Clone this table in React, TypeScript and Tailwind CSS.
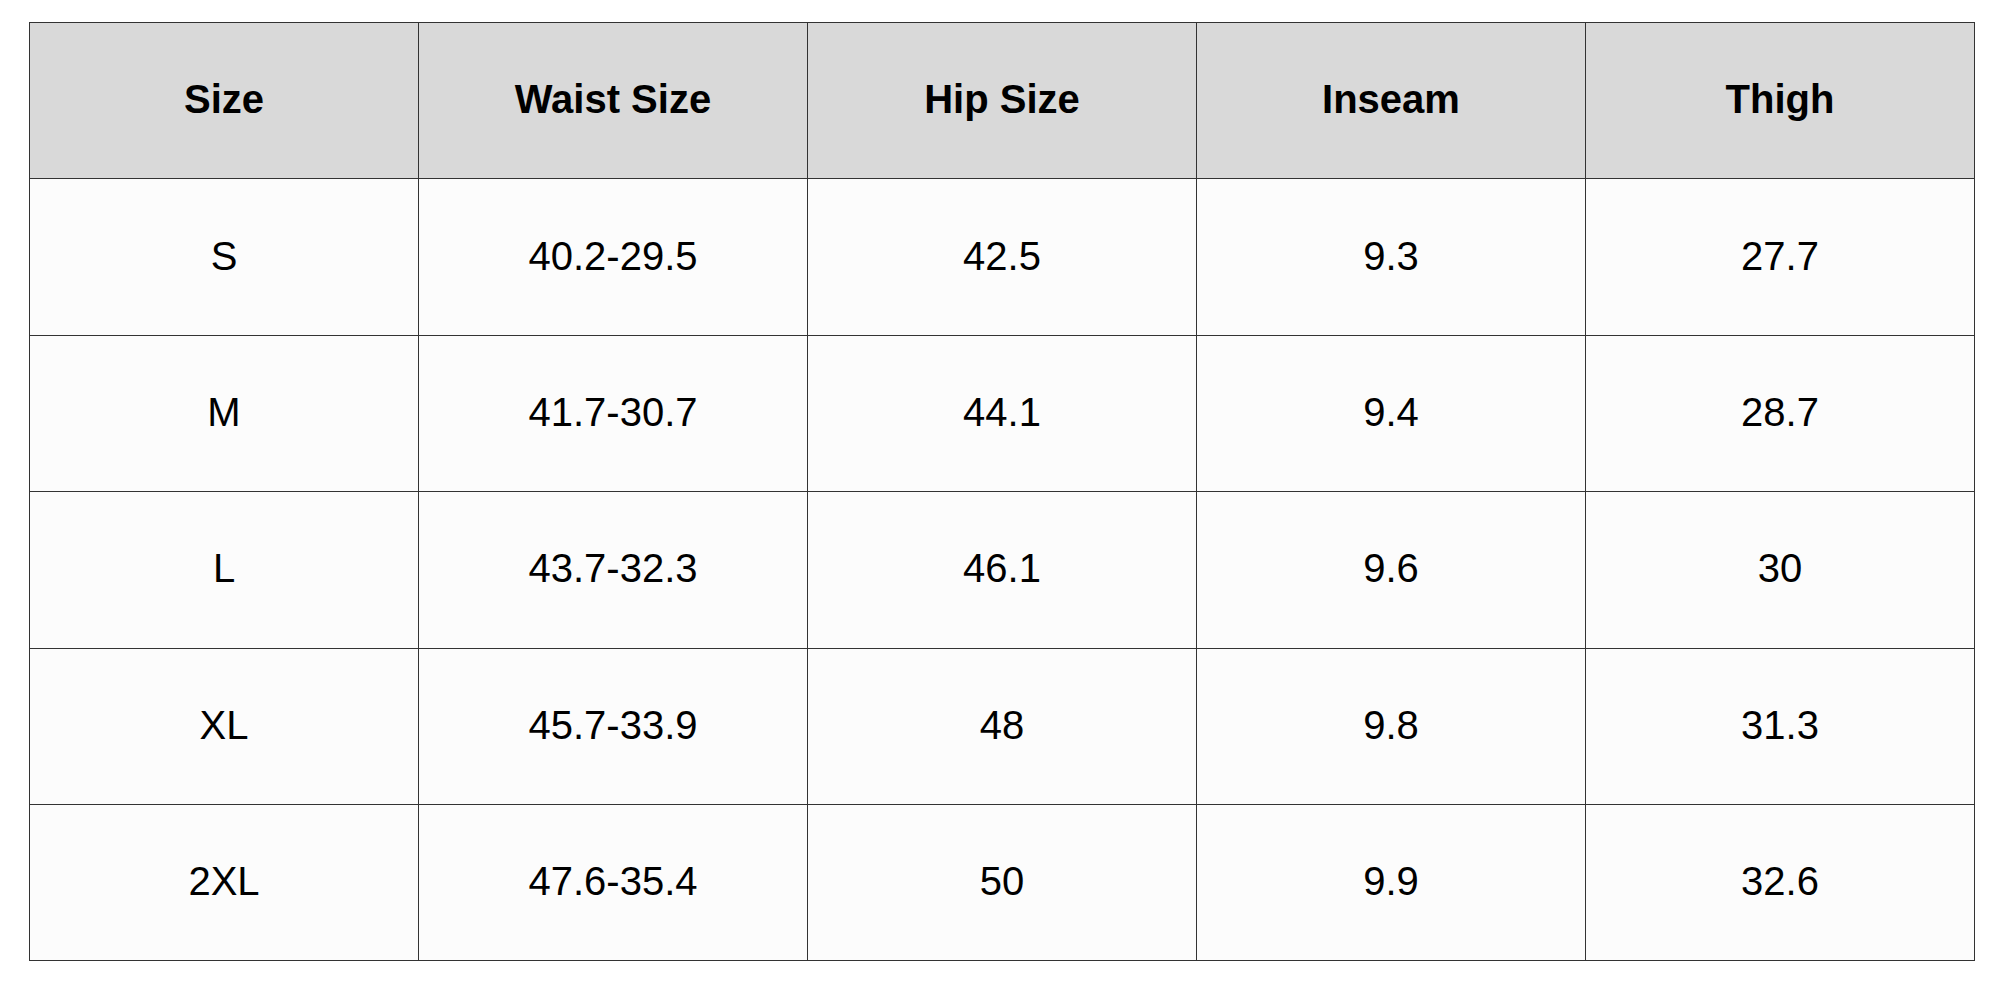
const headers = ["Size", "Waist Size", "Hip Size", "Inseam", "Thigh"];

const rows = [
  ["S", "40.2-29.5", "42.5", "9.3", "27.7"],
  ["M", "41.7-30.7", "44.1", "9.4", "28.7"],
  ["L", "43.7-32.3", "46.1", "9.6", "30"],
  ["XL", "45.7-33.9", "48", "9.8", "31.3"],
  ["2XL", "47.6-35.4", "50", "9.9", "32.6"],
];

export default function App() {
  return (
    <div className="min-h-screen w-full bg-white pl-[29px] pt-[22px] font-['Liberation_Sans',Arial,sans-serif] text-black">
      <table className="w-[1946px] table-fixed border-collapse border border-[#444]">
        <thead>
          <tr className="h-[156.4px] bg-[#d9d9d9]">
            {headers.map((h) => (
              <th key={h} className="border border-[#333] pb-[3px] text-center text-[40px] font-bold">
                {h}
              </th>
            ))}
          </tr>
        </thead>
        <tbody>
          {rows.map((row) => (
            <tr key={row[0]} className="h-[156.4px] bg-[#fcfcfc]">
              {row.map((cell, i) => (
                <td key={i} className="border border-[#333] pb-[3px] text-center text-[40px] font-normal">
                  {cell}
                </td>
              ))}
            </tr>
          ))}
        </tbody>
      </table>
    </div>
  );
}
